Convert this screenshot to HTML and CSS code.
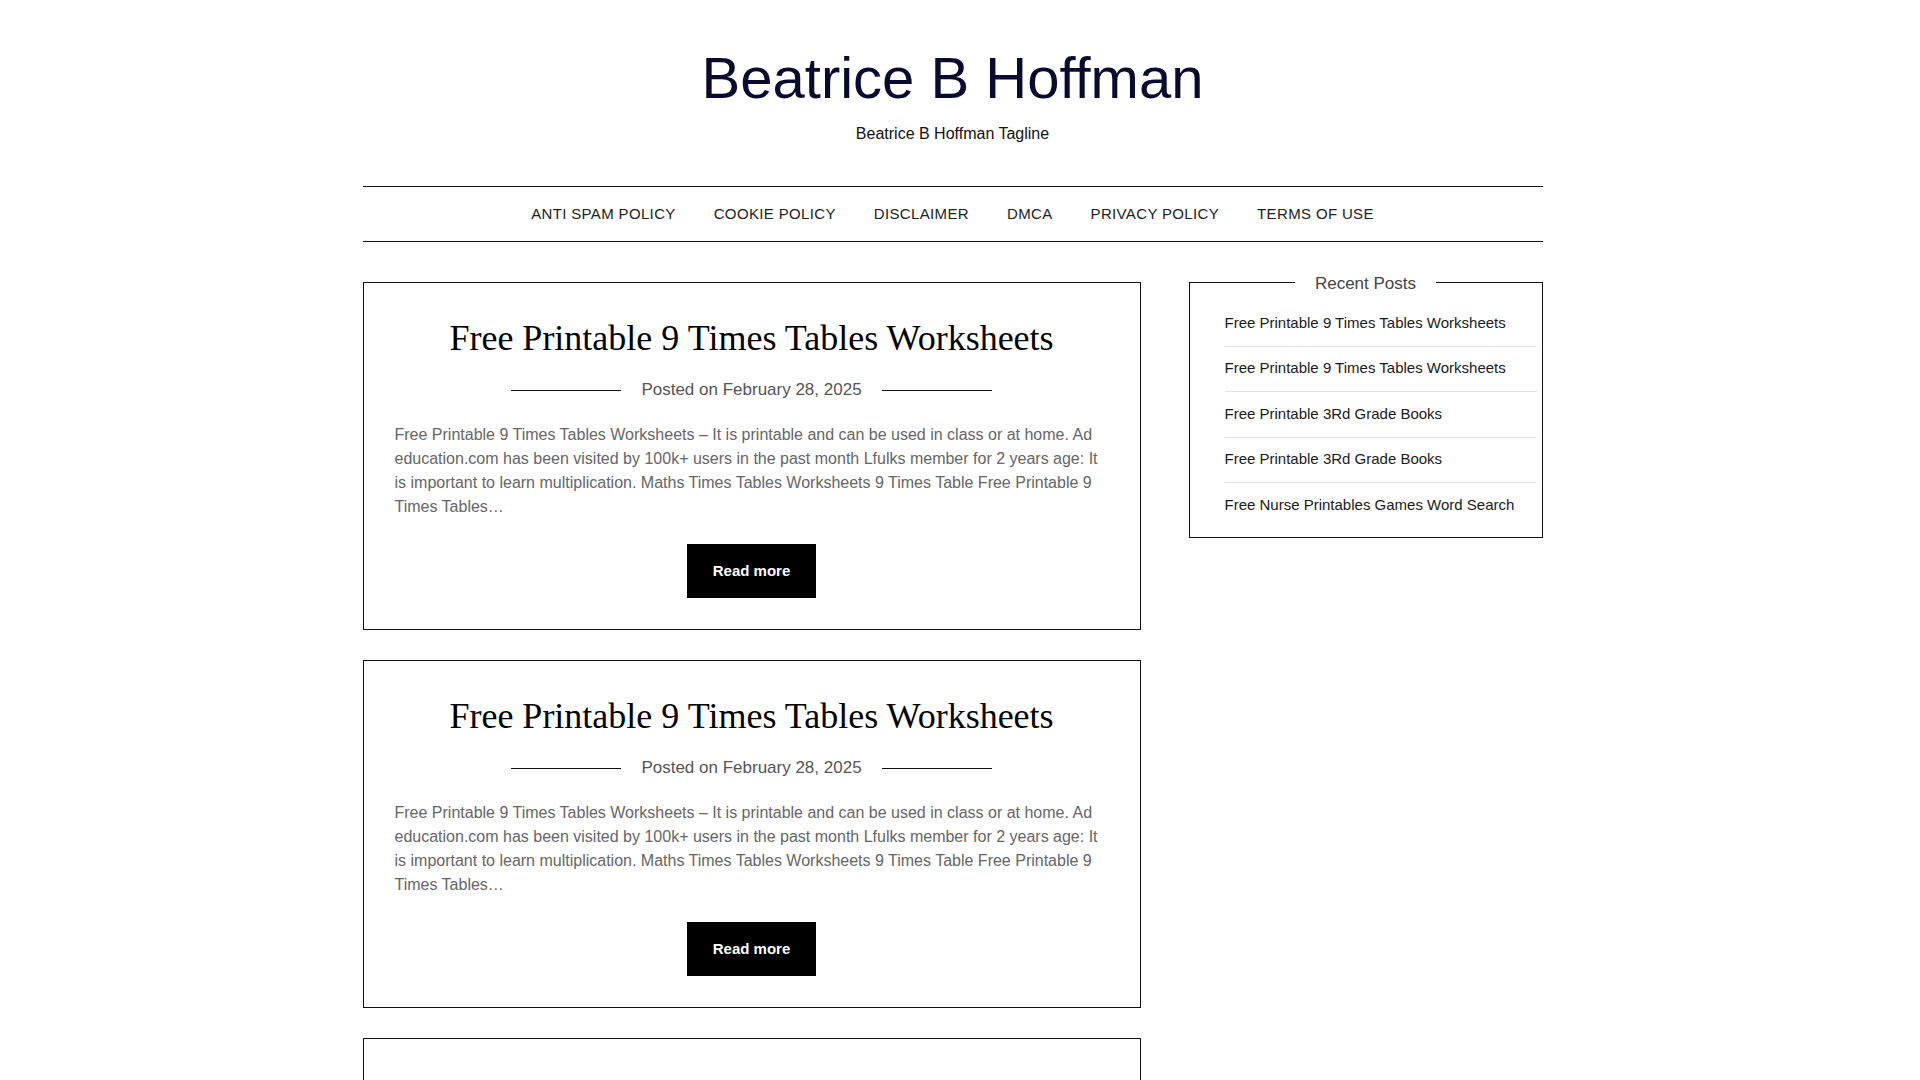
FILE: index.html
```html
<!DOCTYPE html>
<html lang="en">
<head>
<meta charset="utf-8">
<title>Beatrice B Hoffman</title>
<link rel="stylesheet" href="styles.css">
</head>
<body>
<div class="container">
  <header class="site-header">
    <h1 class="site-title">Beatrice B Hoffman</h1>
    <p class="site-tagline">Beatrice B Hoffman Tagline</p>
  </header>
  <nav class="main-nav">
    <a href="#">Anti Spam Policy</a>
    <a href="#">Cookie Policy</a>
    <a href="#">Disclaimer</a>
    <a href="#">DMCA</a>
    <a href="#">Privacy Policy</a>
    <a href="#">Terms Of Use</a>
  </nav>
  <div class="content">
    <main class="posts">
      <article class="post">
        <h2 class="post-title">Free Printable 9 Times Tables Worksheets</h2>
        <div class="post-meta"><span>Posted on February 28, 2025</span></div>
        <p class="post-excerpt">Free Printable 9 Times Tables Worksheets – It is printable and can be used in class or at home. Ad education.com has been visited by 100k+ users in the past month Lfulks member for 2 years age: It is important to learn multiplication. Maths Times Tables Worksheets 9 Times Table Free Printable 9 Times Tables…</p>
        <div class="post-actions"><a class="read-more" href="#">Read more</a></div>
      </article>
      <article class="post">
        <h2 class="post-title">Free Printable 9 Times Tables Worksheets</h2>
        <div class="post-meta"><span>Posted on February 28, 2025</span></div>
        <p class="post-excerpt">Free Printable 9 Times Tables Worksheets – It is printable and can be used in class or at home. Ad education.com has been visited by 100k+ users in the past month Lfulks member for 2 years age: It is important to learn multiplication. Maths Times Tables Worksheets 9 Times Table Free Printable 9 Times Tables…</p>
        <div class="post-actions"><a class="read-more" href="#">Read more</a></div>
      </article>
      <article class="post">
        <h2 class="post-title">Free Printable 3Rd Grade Books</h2>
        <div class="post-meta"><span>Posted on February 28, 2025</span></div>
        <p class="post-excerpt">Free Printable 3Rd Grade Books – It is printable and can be used in class or at home.</p>
        <div class="post-actions"><a class="read-more" href="#">Read more</a></div>
      </article>
    </main>
    <aside class="sidebar">
      <h2 class="widget-title">Recent Posts</h2>
      <ul class="recent-list">
        <li><a href="#">Free Printable 9 Times Tables Worksheets</a></li>
        <li><a href="#">Free Printable 9 Times Tables Worksheets</a></li>
        <li><a href="#">Free Printable 3Rd Grade Books</a></li>
        <li><a href="#">Free Printable 3Rd Grade Books</a></li>
        <li><a href="#">Free Nurse Printables Games Word Search</a></li>
      </ul>
    </aside>
  </div>
</div>
</body>
</html>
```
FILE: styles.css
```css
html, body {
  margin: 0;
  padding: 0;
  background: #ffffff;
}
body {
  padding-right: 15px;
  font-family: "Liberation Sans", Arial, sans-serif;
  color: #222222;
}
a {
  text-decoration: none;
  color: inherit;
}
.container {
  width: 1180px;
  margin: 0 auto;
}
.site-header {
  padding-top: 45px;
  text-align: center;
}
.site-title {
  margin: 0;
  font-size: 58px;
  line-height: 66px;
  font-weight: 400;
  color: #0a0a2e;
}
.site-tagline {
  margin: 13.5px 0 0;
  font-size: 16px;
  line-height: 18px;
  color: #111111;
}
.main-nav {
  margin-top: 43.5px;
  border-top: 1px solid #111111;
  border-bottom: 1px solid #111111;
  height: 53px;
  padding-bottom: 1px;
  display: flex;
  justify-content: center;
  align-items: center;
}
.main-nav a {
  padding: 0 19px;
  font-size: 15px;
  letter-spacing: 0.35px;
  text-transform: uppercase;
  color: #222222;
}
.content {
  margin-top: 40px;
  display: grid;
  grid-template-columns: 778px 354px;
  column-gap: 48px;
  align-items: start;
}
.post {
  border: 1px solid #111111;
  padding: 32px 31px 31px 31px;
  margin-bottom: 30px;
  text-align: center;
}
.post-title {
  margin: 0;
  font-family: "Liberation Serif", "Times New Roman", serif;
  font-weight: 400;
  font-size: 36px;
  line-height: 46px;
  color: #000000;
}
.post-meta {
  margin-top: 19px;
  display: flex;
  justify-content: center;
  align-items: center;
  gap: 20px;
  font-size: 17px;
  line-height: 20px;
  color: #555555;
}
.post-meta::before,
.post-meta::after {
  content: "";
  width: 110px;
  height: 1px;
  background: #111111;
}
.post-excerpt {
  margin: 23px 0 0;
  text-align: left;
  font-size: 16px;
  line-height: 24px;
  color: #666666;
}
.post-actions {
  margin-top: 25px;
}
.read-more {
  display: inline-block;
  background: #000000;
  color: #ffffff;
  font-weight: 700;
  font-size: 15px;
  height: 54px;
  line-height: 54px;
  padding: 0 26px;
  vertical-align: top;
}
.sidebar {
  border: 1px solid #111111;
  padding: 0 5px 9px 35px;
}
.widget-title {
  display: table;
  margin: -10px auto 0;
  padding: 0 20px;
  background: #ffffff;
  font-size: 17px;
  line-height: 20px;
  font-weight: 400;
  color: #444444;
  position: relative;
  left: -15px;
  top: 1px;
}
.recent-list {
  list-style: none;
  margin: 0;
  padding: 8px 0 0;
}
.recent-list li {
  padding: 12.5px 0 14.75px;
  font-size: 15px;
  line-height: 17.25px;
  border-bottom: 1px solid #e2e2e2;
  color: #1a1a1a;
}
.recent-list li:last-child {
  border-bottom: none;
}
```
